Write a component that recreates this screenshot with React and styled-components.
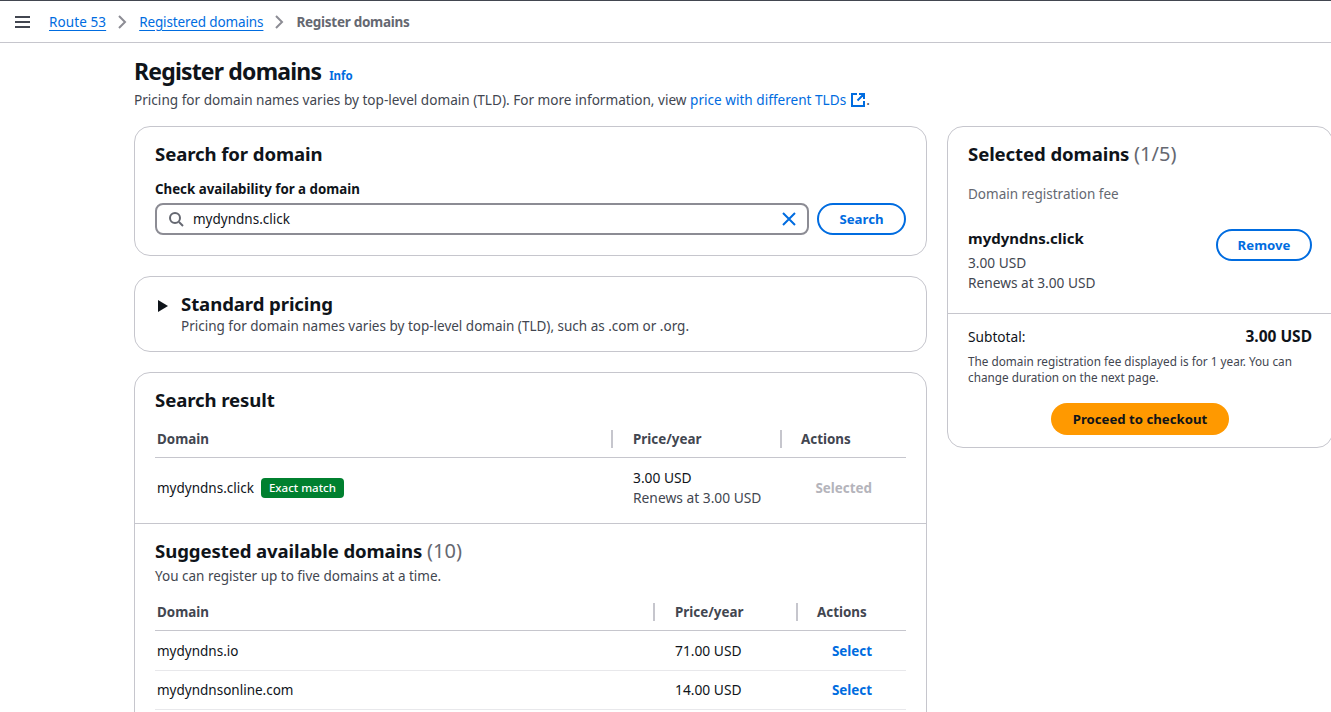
import React from 'react'
import styled, { createGlobalStyle } from 'styled-components'

const GlobalStyle = createGlobalStyle`
  html, body {
    margin: 0;
    height: 712px;
    overflow: hidden;
    background: #fff;
  }
  body {
    font-family: "Noto Sans", "Open Sans", sans-serif;
    font-size: 13.5px;
    color: #0f141a;
  }
  * { box-sizing: border-box; }
`

const Breadcrumbs = styled.nav`
  height: 43px;
  border-top: 1px solid #424650;
  border-bottom: 1px solid #c6c6cd;
  display: flex;
  align-items: center;
  padding-left: 15px;
`

const Burger = styled.svg`
  width: 15px;
  height: 12px;
  margin-right: 19px;
  color: #424650;
`

const Crumb = styled.a`
  color: #006ce0;
  text-decoration: underline;
  text-underline-offset: 3px;
  letter-spacing: ${p => p.$spacing || '-0.12px'};
`

const Current = styled.span`
  color: #656871;
  font-weight: 700;
  letter-spacing: -0.28px;
`

const Chevron = styled.svg`
  width: 11px;
  height: 14px;
  margin: 0 11px;
  color: #8c8c94;
`

const Main = styled.main`
  display: grid;
  grid-template-columns: 793px 386px;
  column-gap: 20px;
  padding-left: 134px;
`

const PageHead = styled.header`
  grid-column: 1 / 3;
  padding-top: 13px;
  height: 83px;
`

const TitleRow = styled.div`
  display: flex;
  align-items: baseline;
  gap: 8px;
`

const PageTitle = styled.h1`
  margin: 0;
  font-size: 23px;
  line-height: 30px;
  font-weight: 700;
  letter-spacing: -0.82px;
`

const InfoLink = styled.a`
  color: #006ce0;
  font-size: 11.5px;
  font-weight: 700;
`

const PageText = styled.p`
  margin: 4px 0 0;
  line-height: 20px;
  color: #424650;
  font-size: 13.6px;
  display: flex;
  align-items: center;
  white-space: pre;
`

const TextLink = styled.a`
  color: #006ce0;
`

const ExternalIcon = styled.svg`
  width: 16px;
  height: 16px;
  margin-left: 4px;
  color: #006ce0;
`

const Column = styled.div`
  display: flex;
  flex-direction: column;
  gap: 20px;
`

const Card = styled.section`
  border: 1px solid #c6c6cd;
  border-radius: 16px;
  background: #fff;
  height: ${p => p.$height || 'auto'};
`

const CardBody = styled.div`
  padding: 14px 20px ${p => p.$bottom || '0'};
`

const CardTitle = styled.h2`
  margin: 0;
  font-size: 18.6px;
  line-height: 26px;
  font-weight: 700;
  letter-spacing: -0.1px;
`

const Count = styled.span`
  font-size: 20px;
  font-weight: 400;
  letter-spacing: 0;
  color: #656871;
`

const FieldLabel = styled.label`
  display: block;
  margin-top: 13px;
  font-size: 13.3px;
  line-height: 18px;
  font-weight: 700;
`

const SearchRow = styled.div`
  display: flex;
  align-items: center;
  gap: 8px;
  margin-top: 5px;
`

const SearchBox = styled.div`
  flex: 1;
  height: 32px;
  border: 2px solid #8c8c94;
  border-radius: 8px;
  display: flex;
  align-items: center;
  padding: 0 10px 0 11px;
`

const SearchValue = styled.span`
  flex: 1;
  margin-left: 9px;
`

const OutlineButton = styled.button`
  height: 32px;
  width: ${p => p.$width};
  border: 2px solid #006ce0;
  border-radius: 20px;
  background: #fff;
  color: #006ce0;
  font: inherit;
  font-size: 13.2px;
  font-weight: 700;
  padding: 0;
`

const Expander = styled.div`
  display: flex;
  padding: 14px 20px 0 22px;
`

const Caret = styled.svg`
  width: 12px;
  height: 12px;
  margin: 9px 12px 0 0;
  flex: none;
`

const Muted = styled.p`
  margin: ${p => p.$top || '0'} 0 0;
  font-size: 13.5px;
  line-height: 18px;
  color: #424650;
`

const Table = styled.div`
  margin-top: ${p => p.$top || '0'};
`

const HeadRow = styled.div`
  display: grid;
  grid-template-columns: ${p => p.$cols};
  height: 34px;
  align-items: center;
  border-bottom: 1px solid #c6c6cd;
  font-size: 13.4px;
  font-weight: 700;
  color: #424650;
`

const HeadCell = styled.div`
  height: 18px;
  line-height: 18px;
  padding-left: ${p => p.$pad || '19px'};
  border-left: ${p => (p.$pad === '2px' ? 'none' : '2px solid #c6c6cd')};
  margin-bottom: 3px;
`

const BodyRow = styled.div`
  display: grid;
  grid-template-columns: ${p => p.$cols};
  height: ${p => p.$height || '39.5px'};
  padding: ${p => p.$padding || '1px 0 0'};
  align-items: center;
  border-bottom: ${p => (p.$last ? 'none' : '1px solid #e8e8eb')};
`

const DomainCell = styled.div`
  padding-left: 2px;
  display: flex;
  align-items: center;
  gap: 7px;
`

const PriceCell = styled.div`
  padding-left: 22px;
  font-size: 13.8px;
  line-height: 20px;
`

const SubPrice = styled.div`
  color: #424650;
`

const ActionCell = styled.div`
  text-align: right;
  padding-right: 34px;
  font-size: 13.4px;
  font-weight: 700;
  color: ${p => (p.$disabled ? '#b4b4bb' : '#006ce0')};
`

const Badge = styled.span`
  background: #00802f;
  color: #fff;
  border-radius: 4px;
  height: 20px;
  line-height: 19px;
  padding: 0 8px;
  font-size: 11.5px;
  font-weight: 500;
`

const Divider = styled.hr`
  margin: 0;
  border: 0;
  border-top: 1px solid #c6c6cd;
`

const SummaryHead = styled.div`
  padding: 14px 20px 0;
  height: 186px;
`

const FeeLabel = styled.p`
  margin: 18px 0 0;
  line-height: 18px;
  color: #656871;
`

const SelectedRow = styled.div`
  display: flex;
  justify-content: space-between;
  margin-top: 25px;
`

const SelectedName = styled.div`
  font-size: 15px;
  font-weight: 700;
  line-height: 20px;
  margin-bottom: 5px;
`

const SummaryLine = styled.div`
  font-size: 13.7px;
  line-height: 20px;
  color: #424650;
`

const RemoveSlot = styled.div`
  padding-top: 1px;
`

const SummaryFoot = styled.div`
  padding: 11px 20px 0;
`

const SubtotalRow = styled.div`
  display: flex;
  justify-content: space-between;
  align-items: center;
  height: 22px;
  font-size: 13.7px;
`

const SubtotalValue = styled.strong`
  font-size: 15.5px;
`

const Note = styled.p`
  margin: 6px 0 0;
  font-size: 11.75px;
  line-height: 16px;
  color: #424650;
`

const CheckoutWrap = styled.div`
  display: flex;
  justify-content: center;
  margin-top: 18px;
  padding-bottom: 12px;
`

const CheckoutButton = styled.button`
  width: 178px;
  height: 32px;
  border: 0;
  border-radius: 20px;
  background: #ff9900;
  color: #0f141a;
  font: inherit;
  font-size: 13.2px;
  font-weight: 700;
  padding: 0;
`

const resultCols = '456px 169px 126px'
const suggestCols = '498px 143px 110px'

const suggestions = [
  { name: 'mydyndns.io', price: '71.00 USD' },
  { name: 'mydyndnsonline.com', price: '14.00 USD' },
]

const TableHead = ({ cols }) => (
  <HeadRow $cols={cols}>
    <HeadCell $pad="2px">Domain</HeadCell>
    <HeadCell $pad="20px">Price/year</HeadCell>
    <HeadCell>Actions</HeadCell>
  </HeadRow>
)

const App = () => {
  return (
    <>
      <GlobalStyle />
      <Breadcrumbs>
        <Burger viewBox="0 0 15 12" fill="none" stroke="currentColor" strokeWidth="2">
          <path d="M0 1h15M0 6h15M0 11h15" />
        </Burger>
        <Crumb $spacing="0.1px">Route 53</Crumb>
        <Chevron viewBox="0 0 11 14" fill="none" stroke="currentColor" strokeWidth="2">
          <path d="M2 1l6 6-6 6" />
        </Chevron>
        <Crumb>Registered domains</Crumb>
        <Chevron viewBox="0 0 11 14" fill="none" stroke="currentColor" strokeWidth="2">
          <path d="M2 1l6 6-6 6" />
        </Chevron>
        <Current>Register domains</Current>
      </Breadcrumbs>
      <Main>
        <PageHead>
          <TitleRow>
            <PageTitle>Register domains</PageTitle>
            <InfoLink>Info</InfoLink>
          </TitleRow>
          <PageText>
            Pricing for domain names varies by top-level domain (TLD). For more information, view <TextLink>price with different TLDs</TextLink>
            <ExternalIcon viewBox="0 0 16 16" fill="none" stroke="currentColor" strokeWidth="2">
              <path d="M7 2H2v12h12V9M9 2h5v5M14 2L7.5 8.5" />
            </ExternalIcon>
            .
          </PageText>
        </PageHead>
        <Column>
          <Card $height="130px">
            <CardBody>
              <CardTitle>Search for domain</CardTitle>
              <FieldLabel>Check availability for a domain</FieldLabel>
              <SearchRow>
                <SearchBox>
                  <svg width="16" height="16" viewBox="0 0 16 16" fill="none" stroke="#656871" strokeWidth="2">
                    <circle cx="7" cy="7" r="5" />
                    <path d="M11 11l4 4" />
                  </svg>
                  <SearchValue>mydyndns.click</SearchValue>
                  <svg width="16" height="16" viewBox="0 0 16 16" fill="none" stroke="#006ce0" strokeWidth="2">
                    <path d="M2 2l12 12M14 2L2 14" />
                  </svg>
                </SearchBox>
                <OutlineButton $width="89px">Search</OutlineButton>
              </SearchRow>
            </CardBody>
          </Card>
          <Card $height="76px">
            <Expander>
              <Caret viewBox="0 0 12 12" fill="#0f141a">
                <path d="M1 0l10 6-10 6z" />
              </Caret>
              <div>
                <CardTitle>Standard pricing</CardTitle>
                <Muted>Pricing for domain names varies by top-level domain (TLD), such as .com or .org.</Muted>
              </div>
            </Expander>
          </Card>
          <Card>
            <CardBody>
              <CardTitle>Search result</CardTitle>
              <Table $top="11px">
                <TableHead cols={resultCols} />
                <BodyRow $cols={resultCols} $height="65px" $padding="0 0 6px" $last>
                  <DomainCell>
                    mydyndns.click
                    <Badge>Exact match</Badge>
                  </DomainCell>
                  <PriceCell>
                    3.00 USD
                    <SubPrice>Renews at 3.00 USD</SubPrice>
                  </PriceCell>
                  <ActionCell $disabled>Selected</ActionCell>
                </BodyRow>
              </Table>
            </CardBody>
            <Divider />
            <CardBody $bottom="60px">
              <CardTitle>
                Suggested available domains <Count>(10)</Count>
              </CardTitle>
              <Muted $top="3px">You can register up to five domains at a time.</Muted>
              <Table $top="12px">
                <TableHead cols={suggestCols} />
                {suggestions.map((item) => (
                  <BodyRow key={item.name} $cols={suggestCols}>
                    <DomainCell>{item.name}</DomainCell>
                    <PriceCell>{item.price}</PriceCell>
                    <ActionCell>Select</ActionCell>
                  </BodyRow>
                ))}
              </Table>
            </CardBody>
          </Card>
        </Column>
        <div>
          <Card>
            <SummaryHead>
              <CardTitle>
                Selected domains <Count>(1/5)</Count>
              </CardTitle>
              <FeeLabel>Domain registration fee</FeeLabel>
              <SelectedRow>
                <div>
                  <SelectedName>mydyndns.click</SelectedName>
                  <SummaryLine>3.00 USD</SummaryLine>
                  <SummaryLine>Renews at 3.00 USD</SummaryLine>
                </div>
                <RemoveSlot>
                  <OutlineButton $width="96px">Remove</OutlineButton>
                </RemoveSlot>
              </SelectedRow>
            </SummaryHead>
            <Divider />
            <SummaryFoot>
              <SubtotalRow>
                <span>Subtotal:</span>
                <SubtotalValue>3.00 USD</SubtotalValue>
              </SubtotalRow>
              <Note>The domain registration fee displayed is for 1 year. You can change duration on the next page.</Note>
              <CheckoutWrap>
                <CheckoutButton>Proceed to checkout</CheckoutButton>
              </CheckoutWrap>
            </SummaryFoot>
          </Card>
        </div>
      </Main>
    </>
  )
}

export default App
